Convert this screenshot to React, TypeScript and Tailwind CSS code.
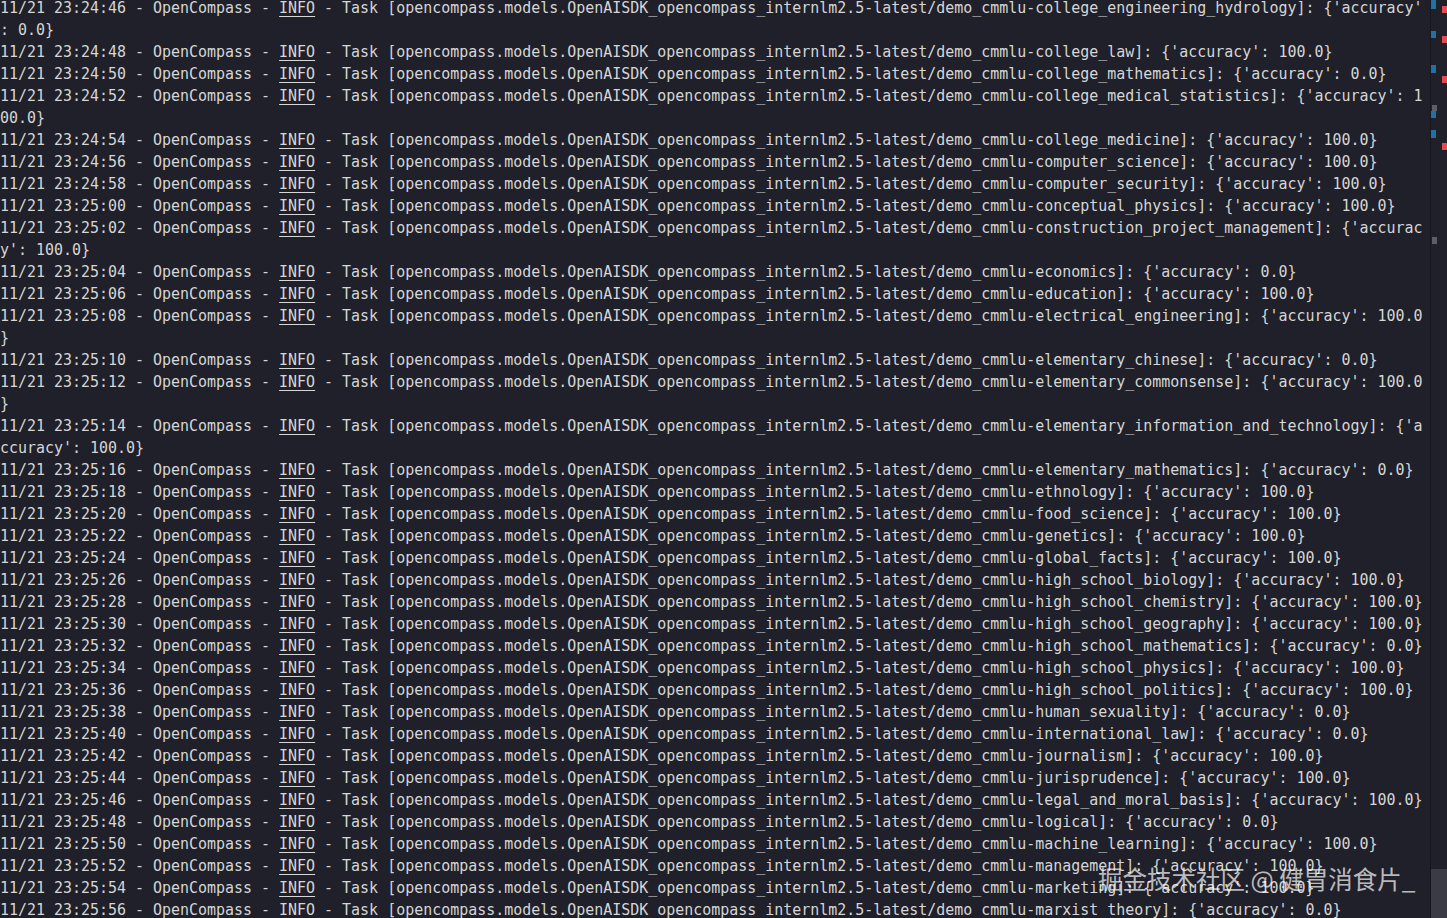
const entries: [string, string, string][] = [
  ["23:24:46", "college_engineering_hydrology", "0.0"],
  ["23:24:48", "college_law", "100.0"],
  ["23:24:50", "college_mathematics", "0.0"],
  ["23:24:52", "college_medical_statistics", "100.0"],
  ["23:24:54", "college_medicine", "100.0"],
  ["23:24:56", "computer_science", "100.0"],
  ["23:24:58", "computer_security", "100.0"],
  ["23:25:00", "conceptual_physics", "100.0"],
  ["23:25:02", "construction_project_management", "100.0"],
  ["23:25:04", "economics", "0.0"],
  ["23:25:06", "education", "100.0"],
  ["23:25:08", "electrical_engineering", "100.0"],
  ["23:25:10", "elementary_chinese", "0.0"],
  ["23:25:12", "elementary_commonsense", "100.0"],
  ["23:25:14", "elementary_information_and_technology", "100.0"],
  ["23:25:16", "elementary_mathematics", "0.0"],
  ["23:25:18", "ethnology", "100.0"],
  ["23:25:20", "food_science", "100.0"],
  ["23:25:22", "genetics", "100.0"],
  ["23:25:24", "global_facts", "100.0"],
  ["23:25:26", "high_school_biology", "100.0"],
  ["23:25:28", "high_school_chemistry", "100.0"],
  ["23:25:30", "high_school_geography", "100.0"],
  ["23:25:32", "high_school_mathematics", "0.0"],
  ["23:25:34", "high_school_physics", "100.0"],
  ["23:25:36", "high_school_politics", "100.0"],
  ["23:25:38", "human_sexuality", "0.0"],
  ["23:25:40", "international_law", "0.0"],
  ["23:25:42", "journalism", "100.0"],
  ["23:25:44", "jurisprudence", "100.0"],
  ["23:25:46", "legal_and_moral_basis", "100.0"],
  ["23:25:48", "logical", "0.0"],
  ["23:25:50", "machine_learning", "100.0"],
  ["23:25:52", "management", "100.0"],
  ["23:25:54", "marketing", "100.0"],
  ["23:25:56", "marxist_theory", "0.0"],
]

// terminal width in characters
const COLS = 158

// scrollbar overview marks: [top, height]
const blueMarks = [[0, 9], [31, 7], [65, 8], [111, 7], [130, 8]]
const redMarks = [[6, 7], [36, 7], [76, 7], [143, 7]]
const greyMarks = [[105, 6], [237, 7]]

function LogEntry({ time, subject, acc }: { time: string; subject: string; acc: string }) {
  const text = `11/21 ${time} - OpenCompass - INFO - Task [opencompass.models.OpenAISDK_opencompass_internlm2.5-latest/demo_cmmlu-${subject}]: {'accuracy': ${acc}}`
  const rows: string[] = []
  for (let i = 0; i < text.length; i += COLS) rows.push(text.slice(i, i + COLS))
  return (
    <>
      {rows.map((r, i) => (
        <div key={i} className="h-[22px] leading-[22px] whitespace-pre">
          {i === 0 ? (
            <>
              {r.slice(0, 31)}
              <span className="underline underline-offset-[3px] decoration-1">{r.slice(31, 35)}</span>
              {r.slice(35)}
            </>
          ) : (
            r
          )}
        </div>
      ))}
    </>
  )
}

export default function App() {
  return (
    <div className="w-[1447px] h-[918px] overflow-hidden bg-[#1f2029] flex flex-row relative">
      <div className="w-[1430px] h-full overflow-hidden">
        <div className="-mt-[3px] text-[14.96px] text-[#d6d6d6] font-['DejaVu_Sans_Mono',monospace]">
          {entries.map(([t, s, a]) => (
            <LogEntry key={t} time={t} subject={s} acc={a} />
          ))}
        </div>
      </div>
      <div className="w-px h-full bg-[#16171d]" />
      <div className="flex-1 h-full relative">
        {blueMarks.map(([top, h]) => (
          <div key={"b" + top} className="absolute left-0 w-[5px] bg-[#1f72a3]" style={{ top, height: h }} />
        ))}
        {greyMarks.map(([top, h]) => (
          <div key={"g" + top} className="absolute left-[1px] w-[5px] bg-[#5c5d66]" style={{ top, height: h }} />
        ))}
        {redMarks.map(([top, h]) => (
          <div key={"r" + top} className="absolute left-[11px] w-[5px] bg-[#e34b4f]" style={{ top, height: h }} />
        ))}
        <div className="absolute left-0 right-0 bottom-0 h-[49px] bg-[#3a3b44]" />
      </div>
      <div className="absolute left-[1098px] top-[864px] text-[24.5px] leading-[30px] text-white/70 whitespace-pre font-['Noto_Sans_CJK_SC',sans-serif]">
        掘金技术社区 @ 健胃消食片_
      </div>
    </div>
  )
}
